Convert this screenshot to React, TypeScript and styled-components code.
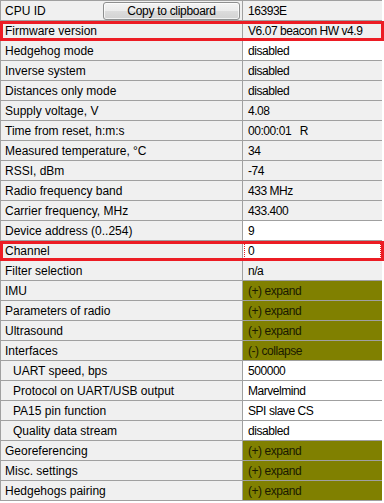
import React from "react";
import styled, { createGlobalStyle, css } from "styled-components";

const Global = createGlobalStyle`
  html, body { margin: 0; padding: 0; background: #ffffff; }
  body { font-family: "Liberation Sans", Arial, sans-serif; }
`;

type Kind = "ro" | "edit" | "group";
interface Row {
  label: string;
  value?: string;
  kind: Kind;
  sub?: boolean;
  highlight?: boolean;
  focus?: boolean;
  button?: boolean;
}

const rows: Row[] = [
  { label: "CPU ID", value: "16393E", kind: "ro", button: true },
  { label: "Firmware version", value: "V6.07 beacon HW v4.9", kind: "ro", highlight: true },
  { label: "Hedgehog mode", value: "disabled", kind: "edit" },
  { label: "Inverse system", value: "disabled", kind: "ro" },
  { label: "Distances only mode", value: "disabled", kind: "ro" },
  { label: "Supply voltage, V", value: "4.08", kind: "ro" },
  { label: "Time from reset, h:m:s", value: "00:00:01   R", kind: "ro" },
  { label: "Measured temperature, °C", value: "34", kind: "ro" },
  { label: "RSSI, dBm", value: "-74", kind: "ro" },
  { label: "Radio frequency band", value: "433 MHz", kind: "ro" },
  { label: "Carrier frequency, MHz", value: "433.400", kind: "ro" },
  { label: "Device address (0..254)", value: "9", kind: "edit" },
  { label: "Channel", value: "0", kind: "edit", highlight: true, focus: true },
  { label: "Filter selection", value: "n/a", kind: "ro" },
  { label: "IMU", value: "(+) expand", kind: "group" },
  { label: "Parameters of radio", value: "(+) expand", kind: "group" },
  { label: "Ultrasound", value: "(+) expand", kind: "group" },
  { label: "Interfaces", value: "(-) collapse", kind: "group" },
  { label: "UART speed, bps", value: "500000", kind: "edit", sub: true },
  { label: "Protocol on UART/USB output", value: "Marvelmind", kind: "edit", sub: true },
  { label: "PA15 pin function", value: "SPI slave CS", kind: "edit", sub: true },
  { label: "Quality data stream", value: "disabled", kind: "edit", sub: true },
  { label: "Georeferencing", value: "(+) expand", kind: "group" },
  { label: "Misc. settings", value: "(+) expand", kind: "group" },
  { label: "Hedgehogs pairing", value: "(+) expand", kind: "group" },
];

const Grid = styled.div`
  display: flex;
  flex-direction: column;
  gap: 1px;
  width: 382px;
  padding: 1px 0 1px 0;
  box-sizing: border-box;
  background: #a0a0a0;
  border-left: 1px solid #a0a0a0;
  font-size: 12px;
  color: #000;
`;

const RowBox = styled.div`
  position: relative;
  display: grid;
  grid-template-columns: 241px 1fr;
  column-gap: 1px;
  height: 19px;
`;

const Label = styled.div<{ $sub?: boolean }>`
  display: flex;
  align-items: center;
  gap: 8px;
  background: #f0f0f0;
  padding-left: ${(p) => (p.$sub ? "12px" : "4px")};
  white-space: nowrap;
  overflow: hidden;
`;

const LabelText = styled.span`
  flex: 1 1 auto;
`;

const Value = styled.div<{ $kind: Kind; $focus?: boolean }>`
  display: flex;
  align-items: center;
  padding-left: 5px;
  font-size: 12px;
  letter-spacing: -0.45px;
  white-space: pre;
  overflow: hidden;
  box-sizing: border-box;
  background: ${(p) =>
    p.$kind === "group" ? "#808000" : p.$kind === "edit" ? "#ffffff" : "#f0f0f0"};
  color: ${(p) => (p.$kind === "group" ? "#1a1a00" : "#000")};
  ${(p) =>
    p.$focus &&
    css`
      outline: 1px dotted #e02020;
      outline-offset: -2px;
    `}
`;

const CopyButton = styled.button`
  width: 137px;
  height: 18px;
  margin-right: 2px;
  padding: 0;
  font-family: "Liberation Sans", Arial, sans-serif;
  font-size: 12px;
  letter-spacing: -0.3px;
  color: #000;
  border: 1px solid #8e8f8f;
  border-radius: 3px;
  background: linear-gradient(#f4f4f4 0%, #ececec 48%, #dcdcdc 52%, #d2d2d2 100%);
  box-shadow: inset 0 0 0 1px rgba(255, 255, 255, 0.7);
  cursor: default;
`;

const RedBox = styled.div`
  position: absolute;
  left: -1px;
  right: -2px;
  top: 0;
  bottom: -1px;
  border: 3px solid #ec1c24;
  pointer-events: none;
`;

export default function App() {
  return (
    <>
      <Global />
      <Grid>
        {rows.map((r) => (
          <RowBox key={r.label}>
            <Label $sub={r.sub}>
              <LabelText>{r.label}</LabelText>
              {r.button && <CopyButton>Copy to clipboard</CopyButton>}
            </Label>
            <Value $kind={r.kind} $focus={r.focus}>
              {r.value}
            </Value>
            {r.highlight && <RedBox />}
          </RowBox>
        ))}
      </Grid>
    </>
  );
}
